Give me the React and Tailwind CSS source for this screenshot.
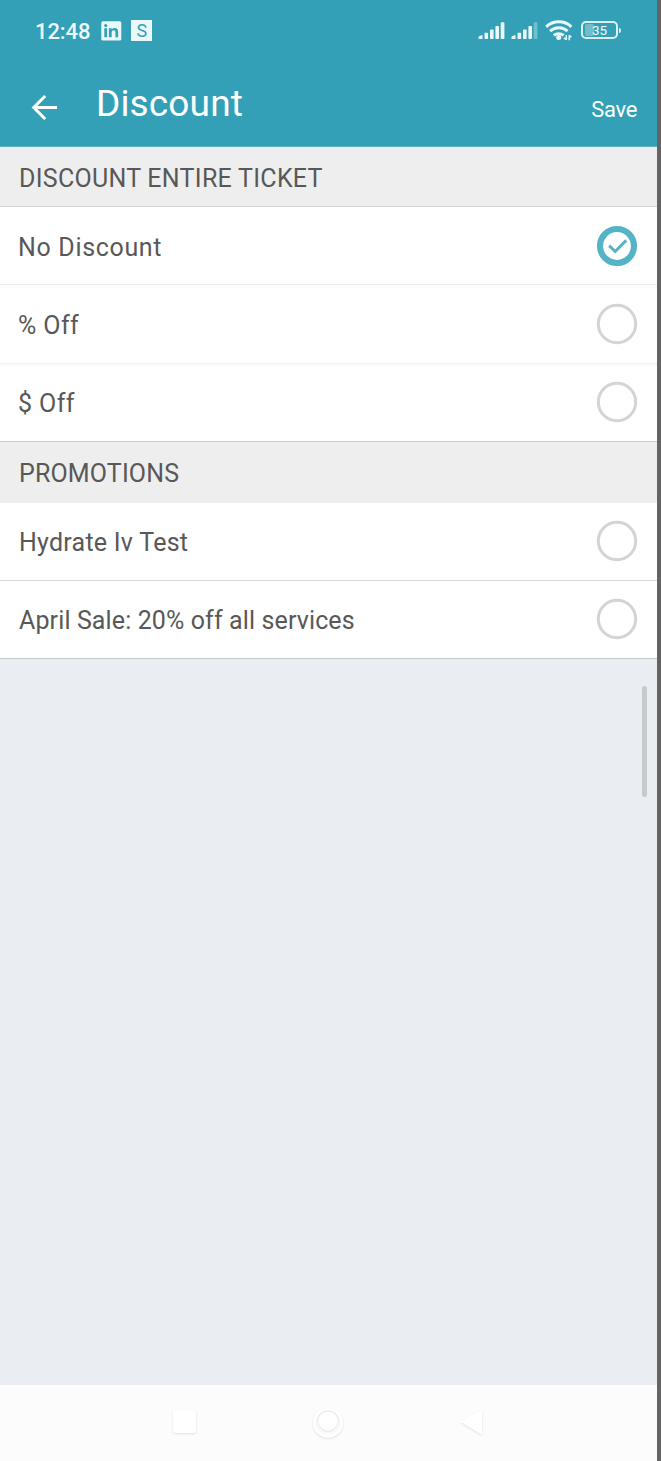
import React, { useState } from "react";
import clsx from "clsx";

const ticketOptions = [
  { id: "none", label: "No Discount", className: "h-[78px] border-[#ececec] tracking-[0.67px] pl-[18px] pt-px" },
  { id: "percent", label: "% Off", className: "h-[79px] border-[#f0f0f0] tracking-[0.4px] pl-[18px] shadow-[inset_0_3px_0_#fbfbfb]" },
  { id: "amount", label: "$ Off", className: "h-[78px] border-[#c9cccd] tracking-[0.4px] pl-[18px] shadow-[inset_0_3px_0_#fbfbfb]" },
];

const promotions = [
  { id: "hydrate", label: "Hydrate Iv Test", className: "h-[78px] border-[#d9d9d9] tracking-[0.25px] pl-[19px]" },
  { id: "april", label: "April Sale: 20% off all services", className: "h-[78px] border-[#c5c9cc] tracking-[0.12px] pl-[19px]" },
];

function SignalBars({ weak }) {
  return (
    <svg width="27" height="18" viewBox="0 0 27 18" fill="#eaf8f9">
      <path d="M0.500 17v-1.800q0-1 1-1.300l3-0.900V17z" />
      <rect x="6.500" y="10.800" width="3.600" height="6.200" rx="0.800" />
      <rect x="12" y="7.400" width="3.600" height="9.600" rx="0.800" />
      <rect x="17.400" y="4" width="3.600" height="13" rx="0.800" />
      <rect x="22.700" y="0.200" width="3.700" height="16.800" rx="0.800" opacity={weak ? 0.35 : 1} />
    </svg>
  );
}

function WifiIcon() {
  return (
    <svg width="28" height="21" viewBox="0 0 28 21" fill="none" stroke="#eaf8f9" strokeWidth="3">
      <path d="M1.2 6.800a18.500 18.500 0 0 1 25.200 0" />
      <path d="M5 11.200a13 13 0 0 1 17.600 0" />
      <path d="M8.800 15.400a8 8 0 0 1 9.800 0" />
      <circle cx="13.700" cy="17.600" r="2.500" fill="#eaf8f9" stroke="none" />
      <path d="M21.300 15v5M19 17.700l2.300 2M24.200 20.200v-5M24.200 15.400l2.200 2" strokeWidth="1.500" />
    </svg>
  );
}

function Battery() {
  return (
    <div className="-mt-px flex items-center">
      <div className="relative flex h-[18px] w-[37px] items-center justify-center rounded-[5px] border-2 border-[#d9f1f3]">
        <span className="absolute left-[2px] top-[1px] h-3 w-[9px] rounded-[2px] bg-[#72bdca]" />
        <span className="relative pt-[2px] text-[13.5px] leading-none">35</span>
      </div>
      <span className="ml-[1px] h-[5px] w-[2px] rounded-r-sm bg-[#d9f1f3]" />
    </div>
  );
}

function StatusBar() {
  return (
    <div className="flex h-[61px] items-center pl-[35px] pr-9 text-[#eefafa]">
      <span className="text-[22px] leading-none font-medium tracking-[-0.1px] pt-[2px]">12:48</span>
      <svg className="ml-[11px]" width="21" height="20" viewBox="0 0 21 20">
        <rect x="0.300" y="0.300" width="20" height="19.200" rx="1.600" fill="#eaf8f9" />
        <g fill="#34a0b7">
          <circle cx="4.700" cy="4.600" r="1.600" />
          <rect x="3.300" y="7.200" width="2.800" height="9" />
          <path d="M7.900 7.200h2.700v1.300c.6-1 1.600-1.600 3-1.600 2.700 0 3.600 1.700 3.600 4.100v5.200h-2.800v-4.700c0-1.300-.3-2.200-1.600-2.200-1.500 0-2.100 1-2.100 2.300v4.600H7.900z" />
        </g>
      </svg>
      <span className="ml-[9px] flex size-[21px] items-center justify-center bg-[#eaf8f9] text-[18px] leading-none text-[#34a0b7]">
        S
      </span>
      <div className="ml-auto flex items-center">
        <SignalBars />
        <span className="ml-[6px]">
          <SignalBars weak />
        </span>
        <span className="ml-[7px] mr-2">
          <WifiIcon />
        </span>
        <Battery />
      </div>
    </div>
  );
}

function Header() {
  return (
    <header className="h-[147px] border-b border-[#63aebd] bg-[#34a0b7] text-white">
      <StatusBar />
      <div className="flex h-[85px] items-center pl-[31px] pr-5">
        <svg className="mt-[7px]" width="27" height="27" viewBox="0 0 27 27" fill="none" stroke="white" strokeWidth="3">
          <path d="M26 13.500H3M14.200 2L2.700 13.500L14.200 25" />
        </svg>
        <h1 className="ml-[38px] text-[37px] leading-none tracking-[0.15px]">Discount</h1>
        <button className="ml-auto mt-[13px] text-[22px] leading-none tracking-[-0.3px]">Save</button>
      </div>
    </header>
  );
}

function Radio({ checked }) {
  return (
    <svg className="mb-px shrink-0" width="42" height="42" viewBox="0 0 42 42" fill="none">
      {checked ? (
        <>
          <circle cx="21" cy="21" r="17" stroke="#55b3c6" strokeWidth="6.200" />
          <path d="M13.200 20.600L19.200 26.500L30.200 15.400" stroke="#55b3c6" strokeWidth="3" />
        </>
      ) : (
        <circle cx="21" cy="21" r="18.700" stroke="#d4d4d4" strokeWidth="3" />
      )}
    </svg>
  );
}

function OptionRow({ option, checked, onSelect }) {
  return (
    <button
      role="radio"
      aria-checked={checked}
      onClick={() => onSelect(option.id)}
      className={clsx("flex w-full items-center justify-between border-b bg-white pr-[19px] text-left text-[25px]", option.className)}
    >
      <span className="pt-[2px] leading-none">{option.label}</span>
      <Radio checked={checked} />
    </button>
  );
}

export default function App() {
  const [selected, setSelected] = useState("none");

  return (
    <div className="flex h-[1461px] w-[661px] bg-[#646464] font-['Roboto',sans-serif]">
      <div className="relative flex w-[657px] flex-col bg-[#eaeef2] text-[#585858]">
        <Header />
        <h2 className="flex h-[60px] items-center border-b border-[#d6d6d6] bg-[#eeeeee] pl-[19px] pt-[3px] text-[25px] leading-none tracking-[0.28px]">
          DISCOUNT ENTIRE TICKET
        </h2>
        {ticketOptions.map((option) => (
          <OptionRow key={option.id} option={option} checked={selected === option.id} onSelect={setSelected} />
        ))}
        <h2 className="flex h-[61px] items-center bg-[#eeeeee] pl-[19px] pt-[2px] text-[25px] leading-none tracking-[0.15px]">
          PROMOTIONS
        </h2>
        {promotions.map((option) => (
          <OptionRow key={option.id} option={option} checked={selected === option.id} onSelect={setSelected} />
        ))}
        <div className="absolute right-[10px] top-[686px] h-[111px] w-[5px] rounded-full bg-[#c6cacd]" />
        <nav className="mt-auto h-[76px] bg-[#fcfcfc]">
          <svg width="657" height="76" viewBox="0 0 657 76" fill="white">
            <g className="drop-shadow-[0_1px_1px_rgba(0,0,0,0.11)]">
              <rect x="173" y="25" width="23" height="23" rx="3" />
              <path fillRule="evenodd" d="M328 22.500a15.200 15.200 0 1 0 0.010 0zM328 25.500a12.200 12.200 0 1 1-0.010 0z" />
              <circle cx="328" cy="36" r="9.500" />
              <path d="M461 37L482 24V50z" />
            </g>
          </svg>
        </nav>
      </div>
    </div>
  );
}
